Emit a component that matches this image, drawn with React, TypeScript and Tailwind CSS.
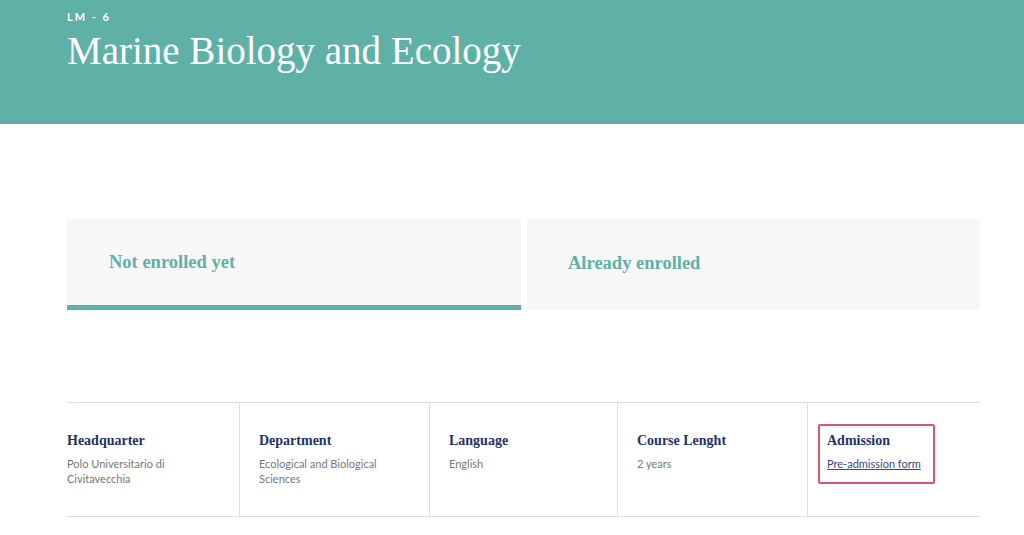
import React from 'react';

const serif = { fontFamily: '"Liberation Serif", "DejaVu Serif", serif' };

type Info = { label: string; value?: string; link?: string };

const info: Info[] = [
  { label: 'Headquarter', value: 'Polo Universitario di Civitavecchia' },
  { label: 'Department', value: 'Ecological and Biological Sciences' },
  { label: 'Language', value: 'English' },
  { label: 'Course Lenght', value: '2 years' },
  { label: 'Admission', link: 'Pre-admission form' },
];

export default function App() {
  return (
    <div className="min-h-[535px] bg-white font-['Lato',sans-serif]">
      <header className="h-[124px] bg-[#5fb1a8] pl-[67px] pt-[9px] text-white">
        <p className="text-[11px] font-bold tracking-[0.18em]">LM - 6</p>
        <h1 className="mt-[2px] text-[39px] leading-[46px]" style={serif}>
          Marine Biology and Ecology
        </h1>
      </header>

      <div className="ml-[67px] w-[913px]">
        <div className="mt-[95px] flex gap-[6px]">
          <div className="flex h-[91px] w-[454px] items-center border-b-[5px] border-[#5fb1a8] bg-[#f7f7f7] pl-[42px] pt-[1px]">
            <span className="text-[18.5px] font-bold text-[#5fb1a8]" style={serif}>
              Not enrolled yet
            </span>
          </div>
          <div className="flex h-[91px] flex-1 items-center bg-[#f7f7f7] pl-[41px] pb-[2px]">
            <span className="text-[18.5px] font-bold text-[#5fb1a8]" style={serif}>
              Already enrolled
            </span>
          </div>
        </div>

        <div className="mt-[92px] grid h-[115px] grid-cols-[172px_190px_188px_190px_1fr] border-y border-[#d6e0ea]">
          {info.map((it, i) => (
            <div
              key={it.label}
              className={`relative pt-[28px] ${i === 0 ? '' : 'border-l border-[#d6e0ea] pl-[19px]'}`}
            >
              <h3 className="text-[14px] font-bold leading-[20px] text-[#1f3268]" style={serif}>
                {it.label}
              </h3>
              {it.value && (
                <p className="mt-[5px] pr-[20px] text-[11px] leading-[15px] text-[#777777]">{it.value}</p>
              )}
              {it.link && (
                <a href="#" className="mt-[5px] block text-[11px] leading-[15px] text-[#34478a] underline">
                  {it.link}
                </a>
              )}
              {it.link && (
                <span className="pointer-events-none absolute left-[10px] top-[21px] h-[60px] w-[117px] rounded-[2px] border-2 border-[#d9566c]" />
              )}
            </div>
          ))}
        </div>
      </div>
    </div>
  );
}
